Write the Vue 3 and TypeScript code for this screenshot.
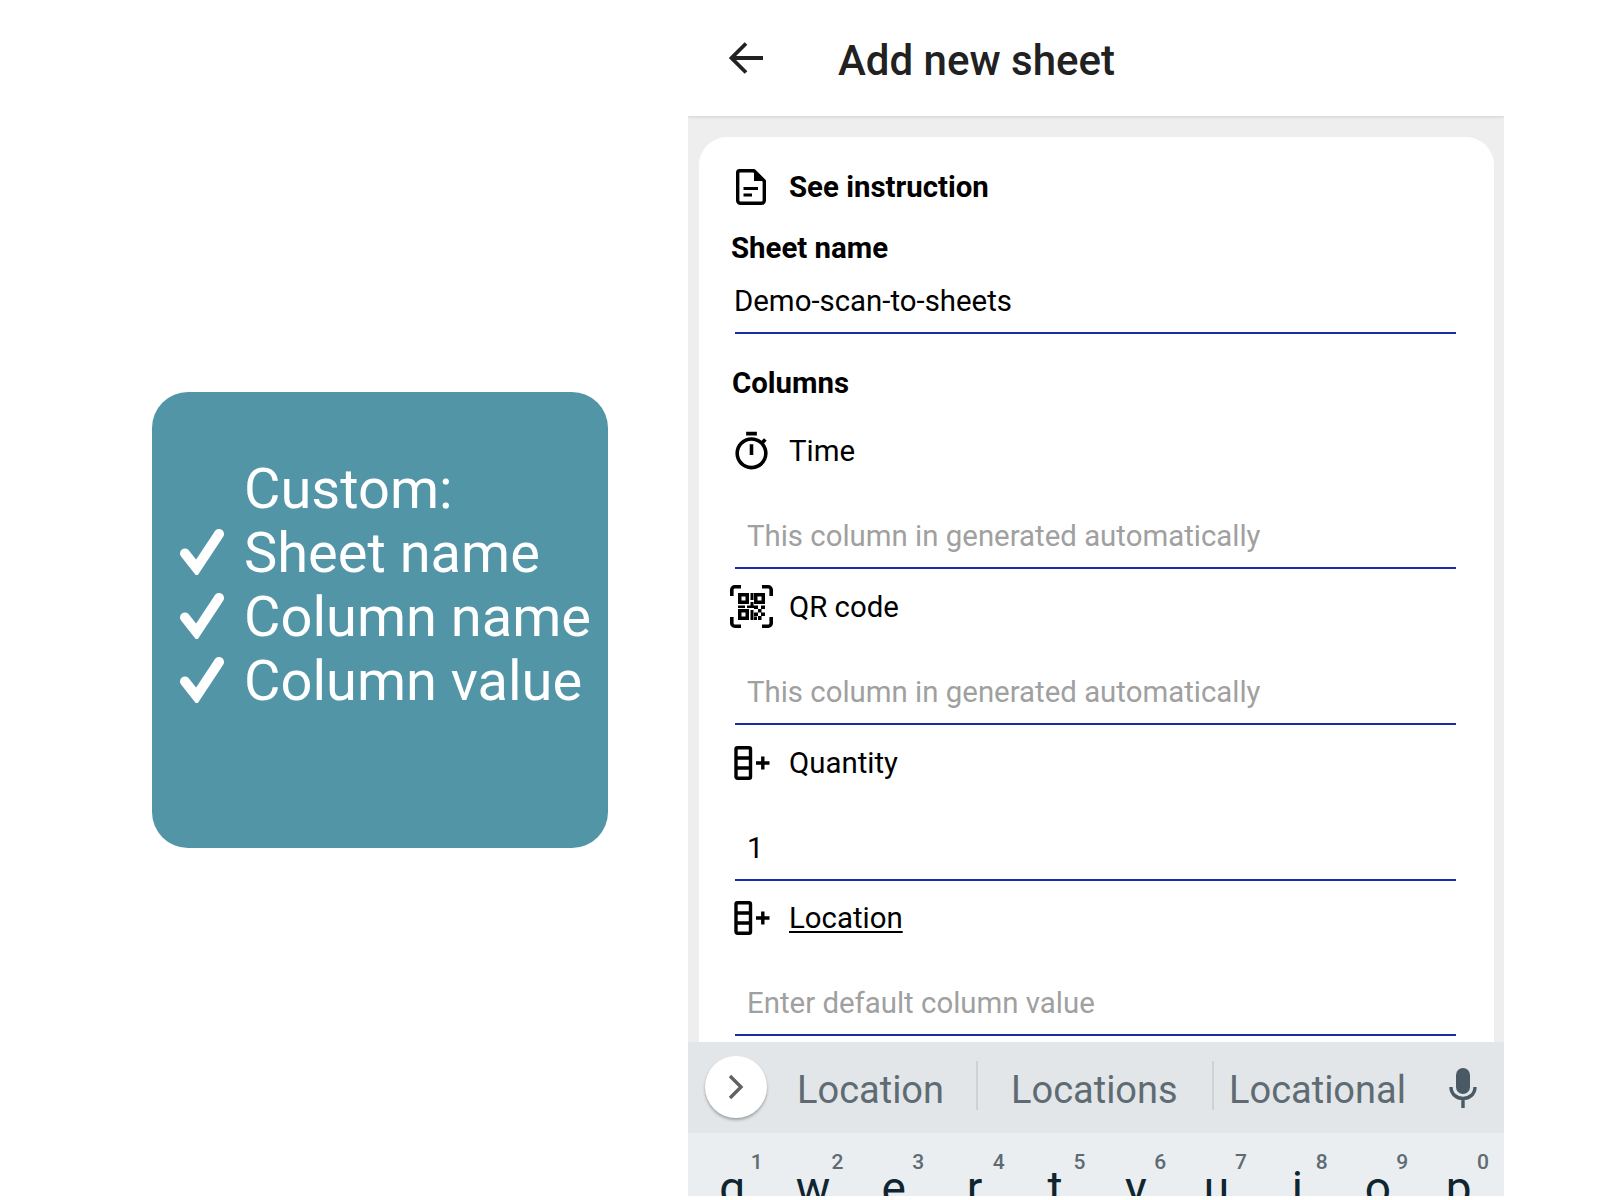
<script setup lang="ts">
const customItems = ['Sheet name', 'Column name', 'Column value']

const columns = [
  { name: 'Time', icon: 'timer', text: 'This column in generated automatically', filled: false, active: false },
  { name: 'QR code', icon: 'qr', text: 'This column in generated automatically', filled: false, active: false },
  { name: 'Quantity', icon: 'add', text: '1', filled: true, active: false },
  { name: 'Location', icon: 'add', text: 'Enter default column value', filled: false, active: true },
]

const keys = [
  ['q', '1'], ['w', '2'], ['e', '3'], ['r', '4'], ['t', '5'],
  ['y', '6'], ['u', '7'], ['i', '8'], ['o', '9'], ['p', '0'],
]
</script>

<template>
  <div class="page">
    <section class="side">
      <div class="promo">
        <div class="promo-row"><span class="check-slot"></span><span>Custom:</span></div>
        <div class="promo-row" v-for="item in customItems" :key="item">
          <span class="check-slot">
            <svg width="46" height="48" viewBox="0 0 46 48">
              <path d="M6 26.500 L17.500 41 L40 7" fill="none" stroke="#fff" stroke-width="10" stroke-linejoin="miter" stroke-linecap="round" />
            </svg>
          </span>
          <span>{{ item }}</span>
        </div>
      </div>
    </section>

    <section class="phone">
      <header class="topbar">
        <svg class="back" width="36" height="36" viewBox="0 0 36 36">
          <path d="M35 18H4M18 3.500 3.500 18 18 32.500" fill="none" stroke="#212121" stroke-width="3.800" />
        </svg>
        <h1>Add new sheet</h1>
      </header>

      <div class="body">
        <div class="card">
          <div class="row instruction">
            <span class="icon-slot">
              <svg width="30" height="36" viewBox="0 0 30 36">
                <path d="M3.500 1.700H18L28.300 12V31.500a2.800 2.800 0 0 1-2.800 2.800H4.500a2.800 2.800 0 0 1-2.800-2.800V3.500a1.800 1.800 0 0 1 1.800-1.800Z" fill="none" stroke="#000" stroke-width="3.400" stroke-linejoin="round" />
                <path d="M18 1.700 28.300 12H18Z" fill="#000" />
                <path d="M7.500 19.500H22M7.500 26H16" stroke="#000" stroke-width="3.200" />
              </svg>
            </span>
            <span>See instruction</span>
          </div>

          <div class="label sheet-label">Sheet name</div>
          <div class="field name-field">Demo-scan-to-sheets</div>

          <div class="label columns-label">Columns</div>

          <div class="column" v-for="col in columns" :key="col.name">
            <div class="row col-title">
              <span class="icon-slot">
                <svg v-if="col.icon === 'timer'" width="43" height="43" viewBox="0 0 24 24">
                  <path d="M15 1H9v2h6V1zm-4 13h2V8h-2v6zm8.030-6.610 1.420-1.420c-.43-.51-.9-.99-1.410-1.410l-1.420 1.420C16.070 4.740 14.120 4 12 4c-4.970 0-9 4.030-9 9s4.020 9 9 9 9-4.030 9-9c0-2.120-.74-4.070-1.970-5.610zM12 20c-3.870 0-7-3.130-7-7s3.130-7 7-7 7 3.130 7 7-3.130 7-7 7z" />
                </svg>
                <svg v-else-if="col.icon === 'qr'" width="43" height="43" viewBox="0 0 43 43">
                  <path d="M1.800 11V4.800a3 3 0 0 1 3-3H11M32 1.800h6.200a3 3 0 0 1 3 3V11M1.800 32v6.200a3 3 0 0 0 3 3H11M32 41.200h6.200a3 3 0 0 0 3-3V32" fill="none" stroke="#000" stroke-width="3.600" />
                  <path d="M8 8h11v11H8zM11.500 11.500v4h4v-4zM24 8h11v11H24zM27.500 11.500v4h4v-4zM8 24h11v11H8zM11.500 27.500v4h4v-4z" fill-rule="evenodd" />
                  <path d="M20.500 8h3v7h-3zM8 20.500h7v2.500H8zM17 20.500h7v2.500h-7zM20.500 17h3v4h-3zM24 20.500h4v3.500h-4zM31 20.500h4v3.500h-4zM28 24h3.500v3.500H28zM24 27.500h4V31h-4zM31 27.500h4V31h-4zM20.500 25h3v10h-3zM28 31h3.500v4H28zM24 31.500h3V35h-3z" />
                </svg>
                <svg v-else class="add-col" width="36" height="34" viewBox="0 0 36 34">
                  <rect x="2" y="1.700" width="14.500" height="30.600" rx="1.500" fill="none" stroke="#000" stroke-width="3.400" />
                  <path d="M2 12H16M2 22H16M22 17H35.500M28.800 10.500V23.500" stroke="#000" stroke-width="3.400" />
                </svg>
              </span>
              <span :class="{ composing: col.active }">{{ col.name }}</span>
            </div>
            <div class="field col-field" :class="{ placeholder: !col.filled }">{{ col.text }}</div>
          </div>
        </div>
      </div>

      <div class="suggest">
        <span class="expand">
          <svg width="18" height="26" viewBox="0 0 18 26">
            <path d="M3 2 14 13 3 24" fill="none" stroke="#5f6368" stroke-width="3.400" />
          </svg>
        </span>
        <span class="word w1">Location</span>
        <i class="divider"></i>
        <span class="word w2">Locations</span>
        <i class="divider"></i>
        <span class="word w3">Locational</span>
        <svg class="mic" width="30" height="40" viewBox="0 0 30 40">
          <rect x="8" y="0" width="14" height="26" rx="7" fill="#4a5a64" />
          <path d="M3 19c0 7 5.500 11.500 12 11.500S27 26 27 19M15 30v10" fill="none" stroke="#4a5a64" stroke-width="3.400" />
        </svg>
      </div>

      <div class="keyboard">
        <div class="key" v-for="[letter, digit] in keys" :key="letter">
          <span class="digit">{{ digit }}</span>
          <span class="letter">{{ letter }}</span>
        </div>
      </div>
    </section>
  </div>
</template>

<style scoped>
.page {
  display: flex;
  width: 1600px;
  height: 1196px;
  background: #fff;
  font-family: Roboto, "Liberation Sans", sans-serif;
  color: #000;
}

.side {
  width: 688px;
  padding: 392px 0 0 152px;
  box-sizing: border-box;
}

.promo {
  width: 456px;
  height: 456px;
  box-sizing: border-box;
  padding-top: 65px;
  background: #5195a7;
  border-radius: 36px;
  color: #fff;
  font-size: 56px;
  line-height: 64px;
}

.promo-row {
  display: flex;
  align-items: center;
  height: 64px;
}

.check-slot {
  display: flex;
  justify-content: flex-end;
  width: 74px;
  margin-right: 21px;
}

.check-slot svg {
  margin: -4px 1px 0 0;
}

.promo-row span:last-child {
  margin-left: -3px;
}

.phone {
  width: 816px;
  display: flex;
  flex-direction: column;
  overflow: hidden;
}

.topbar {
  height: 116px;
  flex: none;
  display: flex;
  align-items: center;
  position: relative;
  z-index: 1;
  background: #fff;
  box-shadow: 0 1px 3px rgba(0, 0, 0, 0.12);
}

.back {
  margin-left: 40px;
  margin-top: -1px;
}

.topbar h1 {
  margin: 4px 0 0 74px;
  font-size: 42px;
  font-weight: 500;
  color: #212121;
}

.body {
  flex: 1;
  min-height: 0;
  overflow: hidden;
  padding: 21px 10px 0 11px;
  background: #eee;
}

.card {
  height: 100%;
  padding-top: 28px;
  box-sizing: border-box;
  overflow: hidden;
  background: #fff;
  border-radius: 28px 28px 0 0;
}

.row {
  display: flex;
  align-items: center;
  height: 44px;
  font-size: 29.400px;
}

.icon-slot {
  width: 44px;
  height: 44px;
  margin: 0 16px 0 30px;
  display: flex;
  align-items: center;
  justify-content: center;
  flex: none;
}

.add-col {
  margin-left: 2px;
}

.instruction {
  font-weight: 700;
}

.label {
  height: 36px;
  font-size: 29.400px;
  line-height: 36px;
  font-weight: 700;
}

.sheet-label {
  margin: 21px 0 0 32px;
}

.columns-label {
  margin: 31px 0 28px 33px;
}

.field {
  margin: 0 38px 0 36px;
  border-bottom: 2.500px solid #1c2ca6;
  font-size: 29.400px;
}

.name-field {
  height: 63px;
  margin-top: 3px;
  line-height: 65px;
  text-indent: -1px;
}

.column {
  height: 155.800px;
}

.col-field {
  margin-top: 34px;
  height: 60px;
  padding-left: 12px;
  line-height: 59px;
}

.placeholder {
  color: #a0a0a0;
}

.composing {
  text-decoration: underline;
  text-underline-offset: 3px;
}

.suggest {
  height: 91px;
  flex: none;
  position: relative;
  display: flex;
  align-items: center;
  background: #e2e6e9;
  color: #5f6b73;
  font-size: 38px;
}

.expand {
  width: 62px;
  height: 62px;
  margin-left: 17px;
  margin-top: -2px;
  display: flex;
  align-items: center;
  justify-content: center;
  flex: none;
  border-radius: 50%;
  background: #fff;
  box-shadow: 0 2px 3px rgba(0, 0, 0, 0.3);
}

.word {
  padding-top: 4px;
  white-space: nowrap;
}

.w1 {
  margin-left: 30px;
  width: 179px;
}

.w2 {
  margin-left: 33px;
  width: 201px;
}

.w3 {
  margin-left: 15px;
  width: 219px;
}

.divider {
  width: 2px;
  height: 49px;
  margin-top: -4px;
  background: #cdd2d6;
  flex: none;
}

.mic {
  margin-top: 1px;
  flex: none;
}

.keyboard {
  flex: none;
  height: 63px;
  box-sizing: border-box;
  padding: 0 5px 0 4px;
  overflow: hidden;
  display: grid;
  grid-template-columns: repeat(10, 1fr);
  background: #eaeef1;
}

.key {
  position: relative;
  height: 63px;
  text-align: center;
}

.digit {
  position: absolute;
  top: 17px;
  right: 10px;
  font-size: 21px;
  line-height: 24px;
  font-weight: 500;
  color: #5f6b73;
}

.letter {
  display: block;
  padding-top: 32px;
  font-size: 46px;
  line-height: 46px;
  color: #0f2530;
}
</style>
